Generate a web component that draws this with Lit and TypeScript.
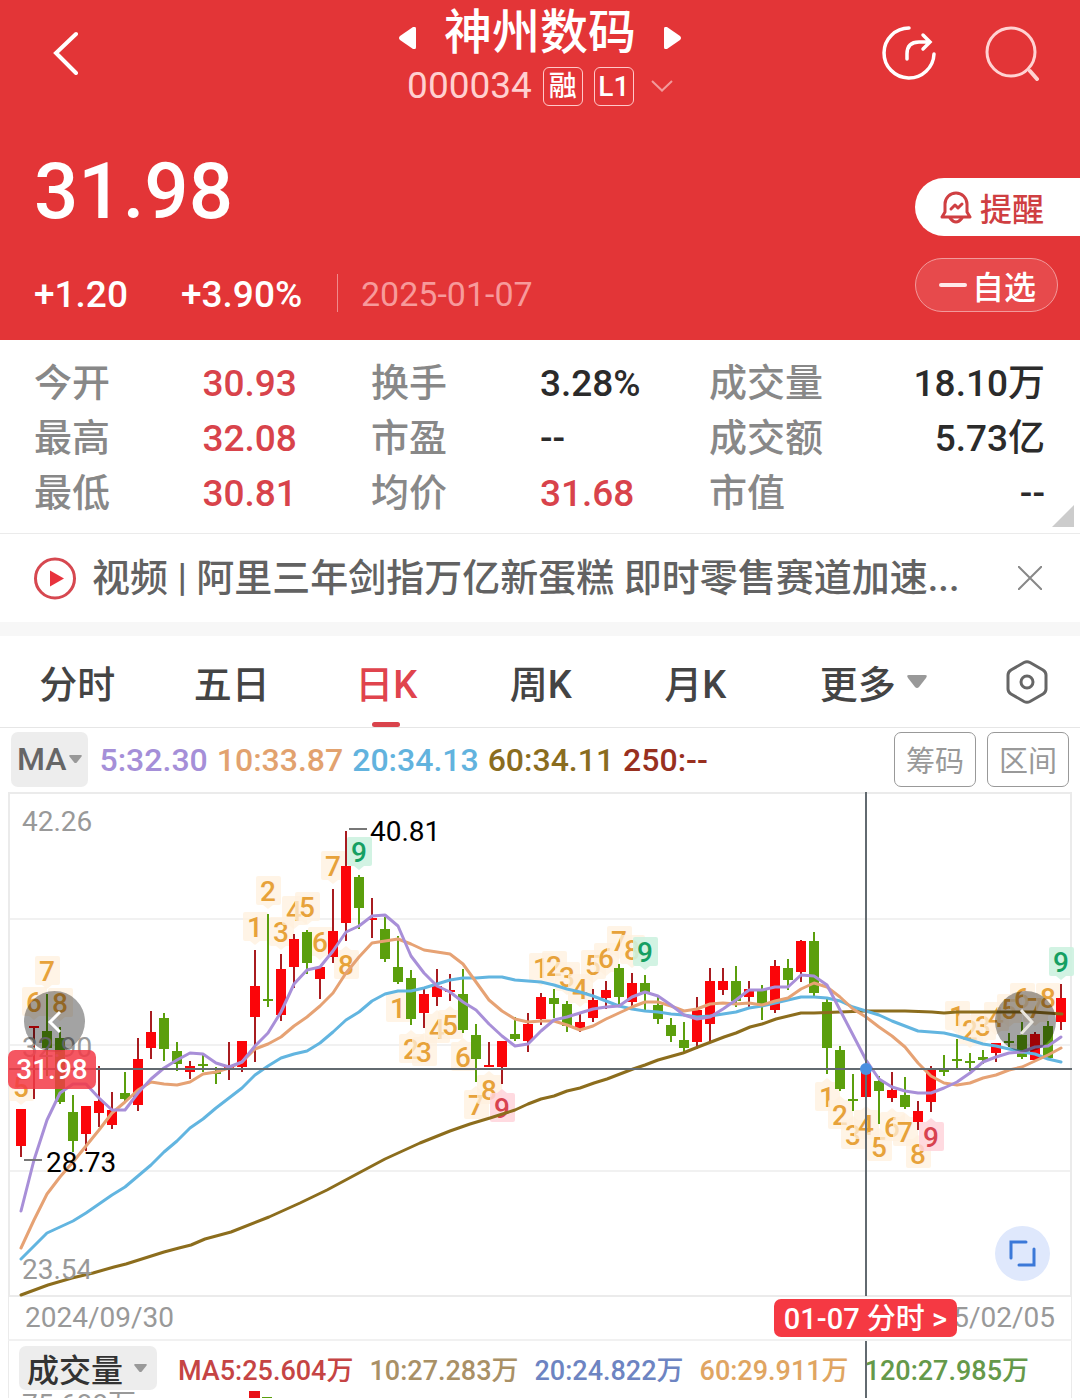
import { LitElement, html, svg, css } from "lit";
import { customElement, state } from "lit/decorators.js";
import { classMap } from "lit/directives/class-map.js";

type Candle = [up: number, high: number, top: number, bottom: number, low: number];
type Signal = [index: number, digit: number, y: number, pointer: "down" | "up", kind?: "sell" | "buy"];

const FIRST_X = 21;
const STEP = 13;
const xOf = (i: number) => FIRST_X + i * STEP;

/* up flag, then high / body top / body bottom / low in chart units */
const CANDLES: Candle[] = [
  [1, 319, 319, 356, 367], [1, 236, 236, 236, 309], [0, 204, 241, 258, 286], [0, 237, 248, 312, 314],
  [0, 305, 322, 351, 362], [1, 316, 316, 344, 361], [1, 276, 311, 323, 337], [1, 302, 320, 335, 339],
  [0, 282, 303, 309, 312], [1, 248, 269, 315, 321], [1, 221, 242, 258, 269], [0, 223, 228, 259, 271],
  [0, 252, 261, 274, 281], [1, 271, 276, 282, 289], [0, 265, 274, 274, 282], [0, 277, 282, 282, 294],
  [1, 252, 277, 277, 290], [1, 251, 251, 277, 282], [1, 160, 196, 227, 272], [0, 124, 209, 211, 217],
  [1, 164, 179, 225, 231], [1, 144, 149, 177, 198], [0, 140, 142, 173, 184], [1, 176, 177, 189, 209],
  [1, 99, 141, 167, 173], [1, 41, 76, 133, 151], [0, 85, 87, 118, 139], [1, 108, 128, 128, 148],
  [0, 127, 139, 169, 172], [0, 146, 177, 192, 194], [0, 180, 188, 229, 235], [1, 199, 204, 223, 238],
  [1, 179, 196, 207, 216], [1, 184, 200, 201, 211], [0, 179, 204, 240, 243], [0, 234, 245, 269, 292],
  [1, 252, 275, 275, 275], [1, 251, 251, 277, 294], [0, 227, 244, 249, 251], [1, 223, 234, 251, 262],
  [1, 203, 207, 229, 235], [0, 199, 208, 214, 228], [0, 211, 214, 236, 242], [1, 224, 232, 238, 242],
  [1, 199, 210, 228, 232], [1, 191, 200, 208, 219], [0, 174, 178, 207, 216], [1, 183, 193, 212, 217],
  [0, 185, 193, 202, 220], [0, 207, 215, 229, 234], [0, 228, 235, 246, 252], [0, 232, 250, 258, 262],
  [1, 207, 220, 252, 259], [1, 178, 191, 234, 252], [1, 178, 191, 200, 205], [0, 176, 191, 211, 217],
  [1, 191, 199, 207, 217], [0, 195, 200, 215, 230], [1, 170, 176, 220, 223], [0, 169, 178, 190, 200],
  [1, 150, 151, 182, 192], [0, 142, 151, 203, 207], [0, 209, 212, 258, 284], [0, 256, 260, 299, 301],
  [0, 284, 309, 311, 321], [1, 279, 279, 307, 311], [0, 286, 291, 301, 334], [1, 282, 300, 308, 312],
  [0, 287, 305, 317, 319], [1, 311, 321, 332, 340], [1, 276, 280, 312, 322], [0, 265, 280, 280, 286],
  [0, 249, 269, 269, 278], [0, 263, 271, 271, 281], [0, 260, 267, 270, 274], [1, 253, 253, 263, 272],
  [0, 243, 251, 252, 257], [0, 232, 245, 267, 269], [1, 242, 244, 270, 270], [0, 231, 236, 268, 269],
  [1, 194, 208, 232, 240],
];

const MA5 = [
  421, 370, 330, 303, 294, 294, 308, 320, 320, 303, 289, 278, 270, 263, 264, 273, 277, 272, 256, 243, 222, 194, 180,
  177, 161, 142, 136, 126, 125, 136, 166, 183, 196, 202, 212, 220, 234, 246, 256, 254, 241, 230, 227, 223, 219, 217,
  216, 207, 202, 206, 215, 225, 229, 227, 219, 210, 200, 200, 197, 197, 185, 186, 195, 220, 245, 270, 289, 297, 301,
  303, 303, 298, 292, 283, 272, 267, 263, 262, 257, 256, 247,
];
const MA10 = [
  458, 430, 404, 387, 372, 356, 340, 323, 312, 300, 292, 294, 295, 292, 284, 282, 278, 272, 259, 254, 247, 236, 227,
  216, 203, 183, 167, 153, 151, 149, 154, 160, 162, 164, 174, 192, 210, 221, 229, 232, 231, 231, 235, 240, 236, 229,
  223, 217, 212, 212, 216, 221, 219, 214, 213, 214, 213, 215, 211, 208, 199, 193, 197, 207, 219, 227, 237, 246, 257,
  273, 286, 293, 295, 293, 288, 285, 280, 277, 271, 265, 258,
];
const MA20 = [
  469, 456, 443, 437, 431, 423, 414, 405, 397, 386, 375, 362, 351, 338, 329, 318, 308, 298, 285, 276, 268, 264, 261,
  253, 242, 230, 222, 211, 204, 201, 201, 198, 194, 190, 188, 188, 187, 187, 190, 191, 192, 195, 199, 202, 206, 211,
  216, 219, 221, 222, 224, 225, 227, 226, 224, 222, 218, 216, 213, 210, 207, 207, 208, 211, 217, 221, 225, 231, 236,
  241, 242, 243, 246, 250, 254, 256, 259, 262, 264, 269, 272,
];
const MA60 =
  "21,505 48,495 72,488 93,483 114,477 126,474 164,462 179,458 191,455 205,449 231,442 269,427 300,413 327,400 " +
  "355,385 385,369 420,353 450,341 470,334 490,328 515,320 528,314 541,309 554,306 567,301 580,298 594,293 607,289 " +
  "633,279 645,275 658,270 683,263 698,257 724,247 736,243 750,237 762,234 776,229 801,223 814,223 840,222 866,221 " +
  "905,221 932,222 944,223 957,222 1033,222 1062,224";

const SIGNALS: Signal[] = [
  [0, 5, 297, "down"], [1, 6, 212, "down"], [2, 7, 181, "down"], [3, 8, 213, "down"],
  [18, 1, 137, "down"], [19, 2, 101, "down"], [20, 3, 142, "down"], [21, 4, 121, "down"], [22, 5, 117, "down"],
  [23, 6, 152, "down"], [24, 7, 76, "down"], [25, 8, 175, "up"], [26, 9, 62, "down", "sell"],
  [29, 1, 218, "up"], [30, 2, 259, "up"], [31, 3, 262, "up"], [32, 4, 239, "up"], [33, 5, 235, "up"],
  [34, 6, 267, "up"], [35, 7, 315, "up"], [36, 8, 300, "up"], [37, 9, 318, "up", "buy"],
  [40, 1, 178, "down"], [41, 2, 176, "down"], [42, 3, 187, "down"], [43, 4, 199, "down"], [44, 5, 175, "down"],
  [45, 6, 168, "down"], [46, 7, 151, "down"], [47, 8, 160, "down"], [48, 9, 162, "down", "sell"],
  [62, 1, 307, "up"], [63, 2, 325, "up"], [64, 3, 345, "up"], [65, 4, 335, "up"], [66, 5, 357, "up"],
  [67, 6, 337, "up"], [68, 7, 342, "up"], [69, 8, 364, "up"], [70, 9, 347, "up", "buy"],
  [72, 1, 226, "down"], [73, 2, 240, "down"], [74, 3, 236, "down"], [75, 4, 227, "down"], [76, 5, 219, "down"],
  [77, 6, 208, "down"], [78, 7, 218, "down"], [79, 8, 208, "down"], [80, 9, 172, "down", "sell"],
];

const points = (ys: number[]) => ys.map((y, i) => `${xOf(i)},${y}`).join(" ");

@customElement("k-line-chart")
export class KLineChart extends LitElement {
  static styles = css`
    :host {
      display: block;
      position: relative;
      font-family: Roboto, "Noto Sans CJK SC", sans-serif;
    }
    .plot {
      display: block;
      width: 100%;
      overflow: visible;
    }
    .frame { fill: none; stroke: #ebebeb; stroke-width: 2; }
    .grid { stroke: #f1f1f1; stroke-width: 2; }
    .up { fill: #fb0509; }
    .up-wick { stroke: #a81c20; stroke-width: 2; }
    .down { fill: #5b9f0d; }
    .down-wick { stroke: #5b9f0d; stroke-width: 2; }
    .ma { fill: none; stroke-width: 3; stroke-linejoin: round; stroke-linecap: round; }
    .ma5 { stroke: #a88fd8; }
    .ma10 { stroke: #e6a274; }
    .ma20 { stroke: #62b5e0; }
    .ma60 { stroke: #8c6d1d; }
    .badge { fill: #fff0de; fill-opacity: 0.75; }
    .badge.sell { fill: #cdf2e0; fill-opacity: 0.9; }
    .badge.buy { fill: #ffd3da; fill-opacity: 0.85; }
    .digit { fill: #e7a23a; font-size: 28px; font-weight: 500; text-anchor: middle; }
    .digit.sell { fill: #159f62; }
    .digit.buy { fill: #d8434f; }
    .scale { fill: #999; font-size: 28px; }
    .extreme { fill: #000; font-size: 28px; }
    .tick { stroke: #777; stroke-width: 2; }
    .cross { stroke: #626a70; stroke-width: 2; }
    .dot { fill: #4a90e0; }
    .nav, .expand {
      position: absolute;
      display: grid;
      place-items: center;
      padding: 0;
      border: 0;
      border-radius: 50%;
    }
    .nav {
      top: 201px;
      width: 61px;
      height: 61px;
      background: rgba(0, 0, 0, 0.36);
    }
    .prev { left: 24px; }
    .next { right: 24px; }
    .expand {
      right: 30px;
      bottom: 15px;
      width: 55px;
      height: 55px;
      background: #dfe8fc;
    }
    .price-tag {
      position: absolute;
      left: 8px;
      top: 260px;
      width: 88px;
      border-radius: 7px;
      background: rgba(243, 58, 70, 0.85);
      color: #fff;
      font-size: 28px;
      font-weight: 500;
      line-height: 39px;
      text-align: center;
    }
  `;

  private candle([up, high, top, bottom, low]: Candle, i: number) {
    const x = xOf(i);
    const thin = bottom - top < 3;
    return svg`
      <line class=${up ? "up-wick" : "down-wick"} x1=${x} x2=${x} y1=${high} y2=${low}></line>
      <rect class=${up ? "up" : "down"} x=${x - 5} y=${top} width="10" height=${thin ? 2 : bottom - top}></rect>`;
  }

  private signal([i, digit, y, pointer, kind = undefined]: Signal) {
    const x = xOf(i);
    const tip = pointer === "down" ? `${x - 5},${y + 14} ${x + 5},${y + 14} ${x},${y + 18}` : `${x - 5},${y - 15} ${x + 5},${y - 15} ${x},${y - 19}`;
    return svg`
      <rect class="badge ${kind ?? ""}" x=${x - 12} y=${y - 15} width="25" height="29" rx="2"></rect>
      <polygon class="badge ${kind ?? ""}" points=${tip}></polygon>
      <text class="digit ${kind ?? ""}" x=${x} y=${y + 10}>${digit}</text>`;
  }

  render() {
    return html`
      <svg class="plot" viewBox="0 0 1080 506" role="img" aria-label="日K">
        <rect class="frame" x="9" y="3" width="1062" height="503"></rect>
        ${[129, 255, 381].map((y) => svg`<line class="grid" x1="10" x2="1070" y1=${y} y2=${y}></line>`)}
        ${SIGNALS.map((s) => this.signal(s))}
        ${CANDLES.map((c, i) => this.candle(c, i))}
        <text class="scale" x="22" y="41">42.26</text>
        <text class="scale" x="22" y="267">32.90</text>
        <polyline class="ma ma60" points=${MA60}></polyline>
        <polyline class="ma ma20" points=${points(MA20)}></polyline>
        <polyline class="ma ma10" points=${points(MA10)}></polyline>
        <polyline class="ma ma5" points=${points(MA5)}></polyline>
        <text class="scale" x="22" y="489">23.54</text>
        <line class="tick" x1="349" x2="367" y1="39" y2="39"></line>
        <text class="extreme" x="370" y="51">40.81</text>
        <line class="tick" x1="24" x2="42" y1="370" y2="370"></line>
        <text class="extreme" x="46" y="382">28.73</text>
        <line class="cross" x1="9" x2="1072" y1="279" y2="279"></line>
        <line class="cross" x1="866" x2="866" y1="2" y2="506"></line>
        <circle class="dot" cx="866" cy="279" r="6"></circle>
      </svg>
      <button class="nav prev" aria-label="上一段">
        <svg width="16" height="24" viewBox="0 0 16 24" fill="none" stroke="#fff" stroke-width="3"><path d="M13 2 3 12l10 10"></path></svg>
      </button>
      <button class="nav next" aria-label="下一段">
        <svg width="16" height="30" viewBox="0 0 16 30" fill="none" stroke="#e9e6e0" stroke-width="3"><path d="M3 3l11 12L3 27"></path></svg>
      </button>
      <div class="price-tag">31.98</div>
      <button class="expand" aria-label="全屏">
        <svg width="27" height="27" viewBox="0 0 27 27" fill="none" stroke="#3b78d8" stroke-width="3" stroke-linecap="round">
          <path d="M17 2H2v16M10 25h15V9"></path>
        </svg>
      </button>
    `;
  }
}

const QUOTES: [string, string, string][] = [
  ["今开", "30.93", "rise"], ["换手", "3.28%", ""], ["成交量", "18.10万", ""],
  ["最高", "32.08", "rise"], ["市盈", "--", ""], ["成交额", "5.73亿", ""],
  ["最低", "30.81", "rise"], ["均价", "31.68", "rise"], ["市值", "--", ""],
];

@customElement("app-root")
export class AppRoot extends LitElement {
  static styles = css`
    :host {
      display: flex;
      flex-direction: column;
      height: 100vh;
      overflow: hidden;
      background: #fff;
      color: #333;
      font-family: Roboto, "Noto Sans CJK SC", sans-serif;
    }
    button {
      padding: 0;
      border: 0;
      background: none;
      color: inherit;
      font: inherit;
    }
    svg { display: block; }
    h1, p, dl, dd { margin: 0; }
    h1 { font-size: 48px; font-weight: 500; line-height: 68px; }

    .header { flex: none; background: #e33537; color: #fff; }
    .topbar {
      display: grid;
      grid-template-columns: 1fr auto 1fr;
      align-items: start;
      height: 118px;
    }
    .back { justify-self: start; padding: 31px 52px; }
    .title { display: flex; justify-content: center; align-items: center; gap: 28px; height: 66px; }
    .turn { padding-top: 10px; }
    .code { display: flex; justify-content: center; align-items: center; gap: 11px; height: 40px; }
    .number { font-size: 37px; line-height: 44px; color: #ffd0d0; }
    .mark {
      box-sizing: border-box;
      width: 40px;
      height: 39px;
      border: 1px solid #ffc9c9;
      border-radius: 6px;
      font-size: 28px;
      font-weight: 500;
      line-height: 38px;
      text-align: center;
    }
    .fold { padding: 0 0 0 6px; }
    .tools { justify-self: end; display: flex; gap: 48px; padding: 25px 40px 0 0; }

    .summary { display: flex; justify-content: space-between; padding: 34px 0 28px 34px; }
    .price { font-size: 78px; font-weight: 500; line-height: 80px; }
    .change { display: flex; margin-top: 42px; font-size: 37px; font-weight: 500; line-height: 41px; height: 38px; }
    .amount { width: 147px; }
    .percent { width: 157px; box-sizing: border-box; border-right: 1px solid #f08a8b; }
    .day { padding-left: 23px; font-size: 34px; font-weight: 400; color: #f79a9b; }
    .actions { display: flex; flex-direction: column; gap: 22px; padding-top: 26px; }
    .remind, .watch {
      display: flex;
      align-items: center;
      gap: 8px;
      font-size: 32px;
      font-weight: 500;
    }
    .remind {
      height: 58px;
      padding: 0 36px 0 25px;
      border-radius: 29px 0 0 29px;
      background: #fff;
      color: #cf3f42;
    }
    .watch {
      align-self: flex-start;
      box-sizing: border-box;
      height: 54px;
      gap: 5px;
      padding: 0 21px 0 23px;
      border: 1px solid #f29a9b;
      border-radius: 27px;
      background: #e74a4c;
    }

    .quotes {
      position: relative;
      flex: none;
      display: grid;
      grid-template-columns: 337fr 338fr 336fr;
      padding: 16px 35px 12px 34px;
      border-bottom: 1px solid #ebebeb;
      font-size: 38px;
      font-weight: 500;
      line-height: 55px;
    }
    .quote { display: grid; grid-template-columns: 1fr 1fr; }
    .quote:nth-child(3n) dd { text-align: right; }
    dt { color: #888; }
    dd { color: #2b2b2b; font-size: 37px; white-space: nowrap; }
    .rise { color: #d8434b; }
    .corner { position: absolute; right: 6px; bottom: 6px; }

    .notice {
      flex: none;
      display: flex;
      align-items: center;
      height: 88px;
      padding: 0 38px 0 34px;
      border-bottom: 14px solid #f7f7f7;
      color: #626262;
      font-size: 38px;
      font-weight: 500;
    }
    .headline {
      flex: 1;
      padding-left: 15px;
      color: inherit;
      line-height: 42px;
      text-decoration: none;
      white-space: nowrap;
    }

    .tabs {
      flex: none;
      display: grid;
      grid-template-columns: repeat(5, 309fr) 403fr 212fr;
      height: 91px;
      border-bottom: 1px solid #e6e6e6;
      color: #444;
      font-size: 38px;
      font-weight: 500;
    }
    .tab {
      position: relative;
      display: flex;
      align-items: center;
      justify-content: center;
      gap: 11px;
    }
    .tab.active { color: #e0444d; }
    .tab.active::after {
      content: "";
      position: absolute;
      bottom: 0;
      width: 28px;
      height: 5px;
      border-radius: 3px;
      background: #d9434c;
    }

    .averages {
      flex: none;
      display: flex;
      align-items: center;
      gap: 11px;
      height: 62px;
      padding: 0 11px;
      font-size: 32px;
      font-weight: 500;
    }
    .picker {
      display: flex;
      align-items: center;
      gap: 3px;
      border-radius: 7px;
      background: #ededed;
      color: #666;
    }
    .ma-picker { height: 55px; padding: 0 6px; }
    .values { flex: 1; display: flex; gap: 9px; padding-top: 2px; }
    .c5 { color: #a58fd8; }
    .c10 { color: #e2a26f; }
    .c20 { color: #62b3de; }
    .c60 { color: #8a6d1f; }
    .c250 { color: #98301f; }
    .outline {
      box-sizing: border-box;
      width: 82px;
      height: 55px;
      border: 1px solid #999;
      border-radius: 7px;
      color: #999;
      font-size: 29px;
      font-weight: 400;
    }

    .dates {
      position: relative;
      flex: none;
      display: flex;
      justify-content: space-between;
      margin: 0 8px;
      padding: 0 16px;
      border-left: 1px solid #ebebeb;
      border-right: 1px solid #ebebeb;
      border-bottom: 2px solid #f1f1f1;
      color: #999;
      font-size: 28px;
      line-height: 43px;
    }
    .jump {
      position: absolute;
      right: 114px;
      top: 3px;
      width: 183px;
      height: 38px;
      border-radius: 7px;
      background: #f53943;
      color: #fff;
      font-size: 29px;
      font-weight: 500;
      line-height: 40px;
      white-space: nowrap;
    }

    .volume {
      position: relative;
      flex: 1;
      min-height: 0;
      overflow: hidden;
      margin: 0 8px;
      border-left: 1px solid #ebebeb;
      border-right: 1px solid #ebebeb;
      font-size: 27px;
      font-weight: 500;
    }
    .legend { display: flex; align-items: center; gap: 16px; padding: 5px 10px 0; white-space: nowrap; }
    .vol-picker {
      height: 44px;
      gap: 11px;
      margin-right: 5px;
      padding: 0 10px 0 8px;
      color: #333;
      font-size: 32px;
    }
    .v5 { color: #c54444; }
    .v10 { color: #a99066; }
    .v20 { color: #6d84c2; }
    .v60 { color: #e0a562; }
    .v120 { color: #65994a; }
    .pane { display: flex; gap: 113px; padding-left: 13px; color: #999; font-size: 28px; font-weight: 400; line-height: 30px; }
    .crosshair { position: absolute; top: 0; bottom: 0; right: 204px; width: 2px; background: #626a70; }
  `;

  @state() private active = 2;

  private caret(width: number, height: number) {
    return html`<svg width=${width} height=${height} viewBox="0 0 20 13" preserveAspectRatio="none" fill="#999">
      <path d="M2 0h16q3 0 1 3l-7 9q-2 2-4 0L1 3Q-1 0 2 0z"></path>
    </svg>`;
  }

  render() {
    return html`
      <header class="header">
        <div class="topbar">
          <button class="back" aria-label="返回">
            <svg width="26" height="44" viewBox="0 0 26 44" fill="none" stroke="#fff" stroke-width="4" stroke-linecap="round"><path d="M24 3 4 22l20 20"></path></svg>
          </button>
          <div>
            <div class="title">
              <button class="turn" aria-label="上一只"><svg width="17" height="22" viewBox="0 0 17 22" fill="#fff"><path d="M14 0q3-1 3 2v18q0 3-3 2L1 13q-2-2 0-4z"></path></svg></button>
              <h1>神州数码</h1>
              <button class="turn" aria-label="下一只"><svg width="17" height="22" viewBox="0 0 17 22" fill="#fff"><path d="M3 0Q0-1 0 2v18q0 3 3 2l13-9q2-2 0-4z"></path></svg></button>
            </div>
            <div class="code">
              <span class="number">000034</span>
              <span class="mark">融</span>
              <span class="mark">L1</span>
              <button class="fold" aria-label="展开"><svg width="22" height="12" viewBox="0 0 22 12" fill="none" stroke="#f29a9b" stroke-width="2"><path d="M1 1l10 9.500L21 1"></path></svg></button>
            </div>
          </div>
          <div class="tools">
            <button aria-label="分享">
              <svg width="56" height="56" viewBox="0 0 56 56" fill="none" stroke="#fff" stroke-width="3.500" stroke-linecap="round">
                <path d="M29 3a25 25 0 1 0 25 26"></path>
                <path d="M27 34v-5q0-12 12-12h10M43 10l7 7-7 7"></path>
              </svg>
            </button>
            <button aria-label="搜索">
              <svg width="56" height="56" viewBox="0 0 56 56" fill="none" stroke="#ffd3d3" stroke-width="3" stroke-linecap="round">
                <circle cx="27" cy="27" r="24"></circle>
                <path d="M46 46l7 8" stroke-width="4"></path>
              </svg>
            </button>
          </div>
        </div>
        <div class="summary">
          <div>
            <div class="price">31.98</div>
            <div class="change">
              <span class="amount">+1.20</span>
              <span class="percent">+3.90%</span>
              <time class="day" datetime="2025-01-07">2025-01-07</time>
            </div>
          </div>
          <div class="actions">
            <button class="remind">
              <svg width="32" height="34" viewBox="0 0 32 34" fill="none" stroke="#cf3f42" stroke-width="3" stroke-linecap="round" stroke-linejoin="round">
                <path d="M5 22V14a11 11 0 0 1 22 0v8l3 5H2z"></path>
                <path d="M10 28q6 8 12 0"></path>
                <path d="M11 19l4-4 3 3 4-4"></path>
              </svg>
              提醒
            </button>
            <button class="watch">
              <svg width="28" height="4" viewBox="0 0 28 4"><rect width="28" height="4" rx="2" fill="#ffe9e9"></rect></svg>
              自选
            </button>
          </div>
        </div>
      </header>

      <dl class="quotes">
        ${QUOTES.map(([label, value, tone]) => html`<div class="quote"><dt>${label}</dt><dd class=${tone}>${value}</dd></div>`)}
        <svg class="corner" width="22" height="22" viewBox="0 0 22 22" fill="#ccc"><path d="M22 0v22H0z"></path></svg>
      </dl>

      <div class="notice">
        <svg width="43" height="43" viewBox="0 0 43 43"><circle cx="21" cy="21.500" r="19.500" fill="none" stroke="#d64850" stroke-width="3"></circle><path d="M16 13.500v16l14-8z" fill="#e8333d"></path></svg>
        <a class="headline" href="#news">视频 | 阿里三年剑指万亿新蛋糕 即时零售赛道加速...</a>
        <button aria-label="关闭"><svg width="24" height="24" viewBox="0 0 24 24" fill="none" stroke="#888" stroke-width="2"><path d="M0 0l24 24M24 0L0 24"></path></svg></button>
      </div>

      <nav class="tabs">
        ${["分时", "五日", "日K", "周K", "月K"].map(
          (name, i) => html`<button class=${classMap({ tab: true, active: i === this.active })} @click=${() => (this.active = i)}>${name}</button>`,
        )}
        <button class="tab">更多${this.caret(20, 13)}</button>
        <button class="tab" aria-label="设置">
          <svg width="42" height="44" viewBox="0 0 42 44" fill="none" stroke="#666" stroke-width="3">
            <path d="M18 2.500q3-1.500 6 0l13 7.500q3 2 3 5v14q0 3-3 5l-13 7.500q-3 1.500-6 0L5 34q-3-2-3-5V15q0-3 3-5z"></path>
            <circle cx="21" cy="22" r="6"></circle>
          </svg>
        </button>
      </nav>

      <div class="averages">
        <button class="picker ma-picker">MA${this.caret(13, 8)}</button>
        <div class="values">
          <span class="c5">5:32.30</span><span class="c10">10:33.87</span><span class="c20">20:34.13</span><span class="c60">60:34.11</span><span class="c250">250:--</span>
        </div>
        <button class="outline">筹码</button>
        <button class="outline">区间</button>
      </div>

      <k-line-chart></k-line-chart>

      <div class="dates">
        <span>2024/09/30</span>
        <span>2025/02/05</span>
        <button class="jump">01-07 分时 &gt;</button>
      </div>

      <section class="volume">
        <div class="crosshair"></div>
        <div class="legend">
          <button class="picker vol-picker">成交量${this.caret(13, 8)}</button>
          <span class="v5">MA5:25.604万</span><span class="v10">10:27.283万</span><span class="v20">20:24.822万</span><span class="v60">60:29.911万</span><span class="v120">120:27.985万</span>
        </div>
        <div class="pane">
          <span>75.688万</span>
          <svg width="24" height="30" viewBox="0 0 24 30"><rect y="1" width="11" height="29" fill="#e8131a"></rect><rect x="13" y="7" width="10" height="23" fill="#5b9f0d"></rect></svg>
        </div>
      </section>
    `;
  }
}
